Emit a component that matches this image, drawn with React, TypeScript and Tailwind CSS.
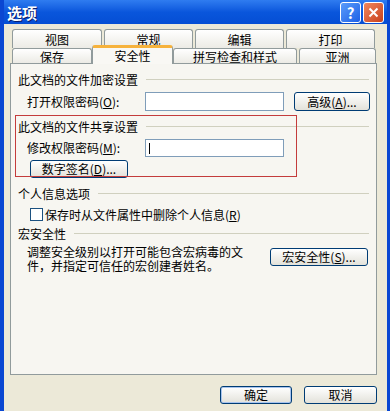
import React from 'react';

const font = "font-['Noto_Sans_CJK_SC',_'Noto_Sans',_sans-serif]";

// 分组标题，后面跟一条刻线
const SectionHeader = ({ title }: { title: string }) => (
  <div className="flex items-center h-[13px] leading-[13px] pr-[7px]">
    <span className="text-[12px] text-black whitespace-nowrap">{title}</span>
    <div className="flex-1 ml-[8px] h-[2px] border-t border-[#D0D0BF] border-b-white" />
  </div>
);

const XpButton = ({ children, className = '' }: { children: React.ReactNode; className?: string }) => (
  <div
    className={`flex items-center justify-center border border-[#003C74] rounded-[3px] bg-gradient-to-b from-white to-[#E3E2DA] text-[12px] text-black leading-none ${className}`}
  >
    {children}
  </div>
);

const Tab = ({ label, className = '' }: { label: string; className?: string }) => (
  <div
    className={`flex items-center justify-center border border-[#919B9C] border-b-0 rounded-t-[3px] bg-gradient-to-b from-white to-[#ECEBE5] text-[12px] text-black leading-[12px] ${className}`}
  >
    {label}
  </div>
);

export default function App() {
  return (
    <div className={`w-[390px] h-[411px] overflow-hidden bg-[#ECE9D8] border-l-[4px] border-r-[3px] border-[#0A47D2] flex flex-col ${font}`}>
      {/* 标题栏 */}
      <div className="h-[24px] -mx-[4px] -mr-[3px] flex items-center justify-between bg-gradient-to-b from-[#2F7CF0] via-[#0A56DC] to-[#054ED4] pl-[7px] pr-[6px]">
        <span className="text-white font-bold text-[15px] leading-none [text-shadow:1px_1px_0_#0A1E6A]">选项</span>
        <div className="flex items-center gap-[2px] pt-[1px]">
          <div className="w-[21px] h-[21px] rounded-[3px] border border-white bg-gradient-to-br from-[#5A9CFA] to-[#1F5FE6] flex items-center justify-center text-white font-bold text-[15px] leading-none">?</div>
          <div className="w-[21px] h-[21px] rounded-[3px] border border-white bg-gradient-to-br from-[#F0865C] to-[#C8401C] flex items-center justify-center">
            <svg width="11" height="11" viewBox="0 0 11 11">
              <path d="M1.5 1.5 L9.5 9.5 M9.5 1.5 L1.5 9.5" stroke="white" strokeWidth="2" />
            </svg>
          </div>
        </div>
      </div>

      <div className="pl-[6px] pr-[10px] flex flex-col">
        {/* 选项卡 */}
        <div className="mt-[5px] pl-[2px] flex gap-[2px] h-[19px]">
          <Tab label="视图" className="w-[90px] h-[19px] pt-[2px]" />
          <Tab label="常规" className="w-[89px] h-[19px] pt-[2px]" />
          <Tab label="编辑" className="w-[89px] h-[19px] pt-[2px]" />
          <Tab label="打印" className="w-[89px] h-[19px] pt-[2px]" />
        </div>
        <div className="pl-[2px] flex items-end h-[15px]">
          <Tab label="保存" className="w-[80px] h-[15px] pt-[1px]" />
          <div className="relative z-10 w-[81px] h-[19px] -mb-[1px] flex items-center justify-center border border-[#919B9C] border-b-0 border-t-[3px] border-t-[#F6B23C] rounded-t-[3px] bg-[#F9F8F4] text-[12px] text-black leading-[12px]">
            安全性
          </div>
          <Tab label="拼写检查和样式" className="w-[124px] h-[15px] pt-[1px]" />
          <Tab label="亚洲" className="w-[77px] h-[15px] ml-[2px] pt-[1px]" />
        </div>

        {/* 面板 */}
        <div className="relative h-[312px] border border-[#919B9C] bg-[#F7F6F1] pl-[7px] pt-[9px] text-[12px] text-black">
          <SectionHeader title="此文档的文件加密设置" />
          <div className="mt-[6px] flex items-center h-[19px] pl-[9px]">
            <span className="w-[118px] whitespace-nowrap">打开权限密码(<u>O</u>):</span>
            <div className="w-[139px] h-[19px] border border-[#7F9DB9] bg-white" />
            <XpButton className="ml-[10px] w-[76px] h-[19px]">高级(<u>A</u>)...</XpButton>
          </div>

          <div className="mt-[9px]">
            <SectionHeader title="此文档的文件共享设置" />
          </div>
          <div className="mt-[6px] flex items-center h-[18px] pl-[9px]">
            <span className="w-[118px] whitespace-nowrap">修改权限密码(<u>M</u>):</span>
            <div className="w-[139px] h-[18px] border border-[#7F9DB9] bg-white flex items-center pl-[3px]">
              <div className="w-px h-[11px] bg-black" />
            </div>
          </div>
          <XpButton className="mt-[3px] ml-[12px] w-[98px] h-[18px]">数字签名(<u>D</u>)...</XpButton>

          <div className="mt-[9px]">
            <SectionHeader title="个人信息选项" />
          </div>
          <div className="mt-[8px] flex items-center h-[13px] pl-[12px]">
            <div className="w-[13px] h-[13px] border border-[#1C5180] bg-white" />
            <span className="ml-[2px] whitespace-nowrap">保存时从文件属性中删除个人信息(<u>R</u>)</span>
          </div>

          <div className="mt-[6px]">
            <SectionHeader title="宏安全性" />
          </div>
          <div className="mt-[5px] flex items-start pl-[9px]">
            <p className="w-[243px] leading-[14px]">
              调整安全级别以打开可能包含宏病毒的文
              <br />
              件，并指定可信任的宏创建者姓名。
            </p>
            <XpButton className="mt-[3px] w-[98px] h-[18px]">宏安全性(<u>S</u>)...</XpButton>
          </div>

          {/* 红色标注框 */}
          <div className="absolute left-[4px] top-[51px] w-[282px] h-[62px] border border-[#C43C3C] pointer-events-none" />
        </div>

        {/* 底部按钮 */}
        <div className="mt-[11px] flex justify-end gap-[12px]">
          <XpButton className="w-[72px] h-[18px] shadow-[inset_0_0_0_1px_#A8C4EE]">确定</XpButton>
          <XpButton className="w-[73px] h-[18px]">取消</XpButton>
        </div>
      </div>
    </div>
  );
}
